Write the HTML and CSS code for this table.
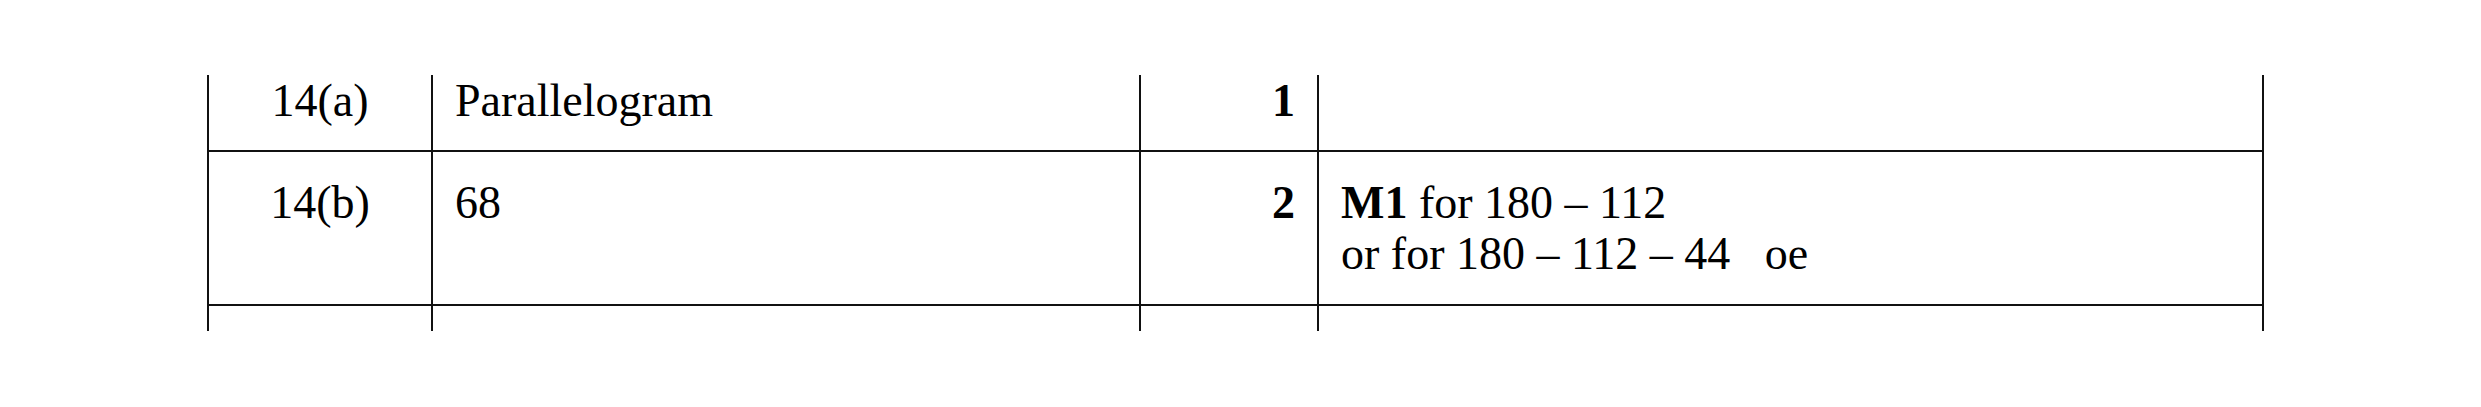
FILE: index.html
```html
<!DOCTYPE html>
<html>
<head>
<meta charset="utf-8">
<link rel="stylesheet" href="styles.css">
</head>
<body>
<div class="sheet">
  <div class="row first">
    <div class="cell num">14(a)</div>
    <div class="cell ans">Parallelogram</div>
    <div class="cell mark">1</div>
    <div class="cell notes"></div>
  </div>
  <div class="row second">
    <div class="cell num">14(b)</div>
    <div class="cell ans">68</div>
    <div class="cell mark">2</div>
    <div class="cell notes"><b>M1</b> for 180 – 112<br>or for 180 – 112 – 44&nbsp;&nbsp; oe</div>
  </div>
  <div class="row third">
    <div class="cell num"></div>
    <div class="cell ans"></div>
    <div class="cell mark"></div>
    <div class="cell notes"></div>
  </div>
</div>
</body>
</html>
```
FILE: styles.css
```css
html, body {
  margin: 0;
  padding: 0;
  background: #fff;
}
body {
  font-family: "Liberation Serif", "Times New Roman", serif;
  font-size: 46px;
  line-height: 51px;
  color: #000;
}
.sheet {
  margin: 75px 0 0 207px;
  width: 2055px;
  border-left: 2px solid #111;
}
.row {
  display: grid;
  grid-template-columns: 224px 708px 178px 945px;
  border-bottom: 2px solid #111;
}
.row.third {
  border-bottom: none;
  height: 25px;
}
.cell {
  border-right: 2px solid #111;
}
.first .cell {
  padding-top: 0;
  padding-bottom: 24px;
  min-height: 51px;
}
.second .cell {
  padding-top: 25px;
  padding-bottom: 25px;
  min-height: 102px;
}
.num {
  text-align: center;
}
.ans {
  padding-left: 22px;
}
.mark {
  text-align: right;
  font-weight: bold;
  padding-right: 22px;
}
.notes {
  padding-left: 22px;
}
.notes b {
  font-weight: bold;
}
```
